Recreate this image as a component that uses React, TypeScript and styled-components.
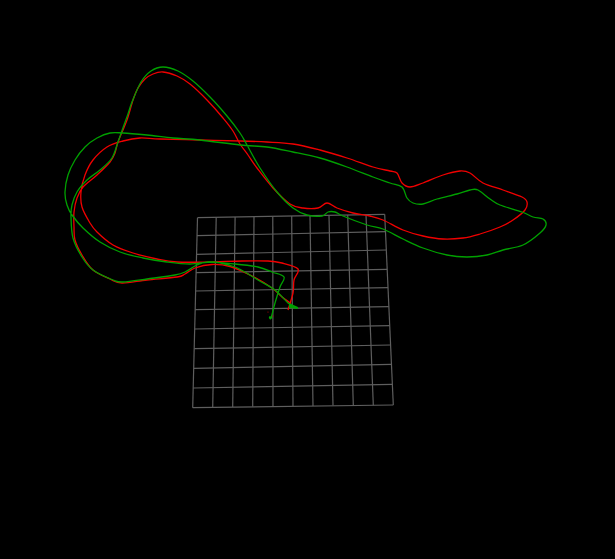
import styled, { createGlobalStyle } from 'styled-components';

type Pt = [number, number];

const GlobalStyle = createGlobalStyle`
  html, body {
    margin: 0;
    padding: 0;
    background: #000;
  }
`;

// grid edges, each list holds the 11 line positions along that edge
const gridTop: Pt[] = [[197.5, 217.7], [216.2, 217.4], [235.1, 217.1], [254, 216.7], [272.8, 216.4], [291.7, 216], [310, 215.7], [329, 215.4], [347.7, 215], [366, 214.7], [384.7, 214.3]];
const gridBottom: Pt[] = [[192.7, 407.7], [212.7, 407.4], [232.7, 407.1], [252.7, 406.8], [273, 406.5], [293, 406.2], [313, 405.9], [333, 405.6], [353.3, 405.4], [373.3, 405.2], [393.3, 405]];
const gridLeft: Pt[] = [[197.5, 217.7], [197, 235.7], [196.6, 254.3], [196.1, 272.7], [195.7, 291], [195.2, 309.7], [194.7, 329], [194.2, 348.7], [193.7, 368.3], [193.2, 388], [192.7, 407.7]];
const gridRight: Pt[] = [[384.7, 214.3], [385.5, 231.7], [386.3, 250], [387.2, 269.3], [388, 287.7], [388.9, 306.7], [389.8, 325.7], [390.6, 345], [391.5, 364.3], [392.4, 384.3], [393.3, 405]];

const greenTrace: Pt[] = [
  [272.5, 318], [269.5, 317], [271, 318], [275, 303], [280, 287], [284, 277], [272, 272], [258, 267], [235, 264], [208, 262],
  [197, 265], [185, 272], [175, 275], [147, 279], [123, 282], [113, 280], [93, 270], [82, 257], [73, 238], [71, 217],
  [72, 205], [77, 192], [87, 180], [100, 170], [112, 158], [118, 142], [124, 125], [128, 114], [132, 102], [141, 82],
  [151, 71], [163, 67], [178, 71], [193, 81], [210, 97], [227, 116], [240, 133], [247, 145], [260, 168], [277, 192],
  [293, 208], [307, 215], [322, 216], [328, 212], [335, 212], [343, 216], [367, 225], [383, 229], [403, 239], [423, 248],
  [447, 255], [467, 257], [487, 255], [503, 250], [523, 245], [540, 233], [546, 225], [543, 219], [533, 217], [522, 212],
  [500, 205], [490, 199], [478, 190], [470, 190], [457, 194], [437, 199], [423, 204], [413, 203], [407, 198], [402, 187],
  [390, 183], [373, 177], [347, 167], [320, 158], [293, 152], [267, 147], [240, 145], [200, 140], [173, 138], [147, 135],
  [123, 133], [110, 133], [97, 138], [85, 147], [75, 160], [68, 175], [65, 192], [67, 205], [72, 215], [83, 228],
  [100, 242], [120, 252], [143, 258], [167, 262], [190, 264], [213, 262], [232, 266], [243, 271], [258, 280], [275, 290],
  [288, 303], [292, 305],
];

const redTrace: Pt[] = [
  [288, 310], [293, 293], [294, 280], [298, 269], [282, 263], [268, 261], [242, 261], [208, 262], [177, 262], [157, 259],
  [133, 253], [113, 245], [97, 232], [90, 223], [82, 207], [81, 192], [85, 175], [93, 160], [107, 147], [123, 141],
  [140, 138], [160, 139], [200, 140], [240, 141], [267, 142], [293, 144], [320, 150], [347, 158], [373, 167], [390, 171],
  [397, 173], [402, 183], [410, 187], [423, 183], [443, 175], [460, 171], [470, 173], [483, 183], [503, 190], [522, 197],
  [527, 202], [525, 210], [513, 220], [500, 227], [480, 234], [463, 238], [443, 239], [423, 236], [403, 230], [383, 220],
  [370, 216], [353, 213], [337, 208], [327, 203], [318, 208], [303, 208], [290, 204], [273, 188], [257, 168], [248, 155],
  [240, 144], [233, 131], [223, 118], [207, 100], [190, 84], [177, 76], [163, 72], [153, 74], [145, 79], [138, 88],
  [133, 100], [127, 120], [118, 142], [115, 153], [110, 162], [97, 175], [83, 187], [77, 198], [74, 212], [74, 227],
  [75, 240], [82, 255], [93, 270], [110, 279], [122, 283], [147, 280], [177, 277], [185, 274], [195, 268], [212, 264.5],
  [230, 266.5], [252, 276], [272, 288], [282, 297], [290, 303], [292, 307],
];

// catmull-rom through the traced points
const smooth = (pts: Pt[]) => {
  let d = `M${pts[0][0]} ${pts[0][1]}`;
  for (let i = 0; i < pts.length - 1; i++) {
    const p0 = pts[Math.max(i - 1, 0)];
    const p1 = pts[i];
    const p2 = pts[i + 1];
    const p3 = pts[Math.min(i + 2, pts.length - 1)];
    const c1x = (p1[0] + (p2[0] - p0[0]) / 6).toFixed(1);
    const c1y = (p1[1] + (p2[1] - p0[1]) / 6).toFixed(1);
    const c2x = (p2[0] - (p3[0] - p1[0]) / 6).toFixed(1);
    const c2y = (p2[1] - (p3[1] - p1[1]) / 6).toFixed(1);
    d += `C${c1x} ${c1y} ${c2x} ${c2y} ${p2[0]} ${p2[1]}`;
  }
  return d;
};

const App = () => (
  <Stage>
    <GlobalStyle />
    <Plot viewBox="0 0 615 559">
      {gridTop.map((p, i) => (
        <GridLine key={`v${i}`} x1={p[0]} y1={p[1]} x2={gridBottom[i][0]} y2={gridBottom[i][1]} />
      ))}
      {gridLeft.map((p, i) => (
        <GridLine key={`h${i}`} x1={p[0]} y1={p[1]} x2={gridRight[i][0]} y2={gridRight[i][1]} />
      ))}
      <Trace d={smooth(redTrace)} $color="#f00000" />
      <Trace d={smooth(greenTrace)} $color="#00a000" />
      <Marker points="289,303 298,307 298,309 289,308" />
      <Speck cx={268} cy={312} r={0.6} />
      <Speck cx={273} cy={316} r={0.6} />
    </Plot>
  </Stage>
);

export default App;

// ============================
//  Styled Components
// ============================

const Stage = styled.div`
  width: 615px;
  height: 559px;
  background: #000;
  overflow: hidden;
`;

const Plot = styled.svg`
  display: block;
  width: 615px;
  height: 559px;
`;

const GridLine = styled.line`
  stroke: #5e5e5e;
  stroke-width: 1.2;
`;

const Trace = styled.path<{ $color: string }>`
  fill: none;
  stroke: ${({ $color }) => $color};
  stroke-width: 1.3;
  stroke-linejoin: round;
`;

const Marker = styled.polygon`
  fill: #00a000;
`;

const Speck = styled.circle`
  fill: #c00000;
`;
